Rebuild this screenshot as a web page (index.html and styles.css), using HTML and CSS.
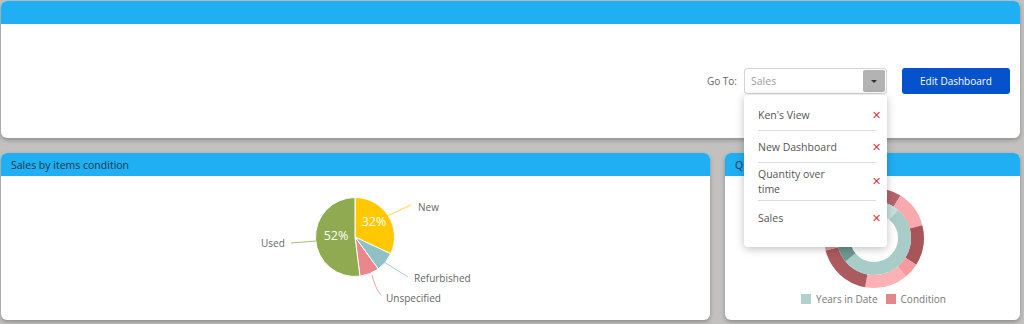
FILE: index.html
```html
<!DOCTYPE html>
<html lang="en">
<head>
<meta charset="utf-8">
<title>Dashboard</title>
<link rel="stylesheet" href="styles.css">
</head>
<body>
<div class="page">
  <section class="panel top-panel">
    <div class="panel-head"></div>
    <div class="top-body">
      <span class="goto-label">Go To:</span>
      <div class="select-wrap">
        <div class="select">
          <span class="select-value">Sales</span>
          <span class="select-btn"><span class="caret"></span></span>
        </div>
        <ul class="dropdown">
          <li class="dd-item"><span class="dd-label">Ken's View</span><span class="dd-x">&#x2715;</span></li>
          <li class="dd-item"><span class="dd-label">New Dashboard</span><span class="dd-x">&#x2715;</span></li>
          <li class="dd-item"><span class="dd-label">Quantity over time</span><span class="dd-x">&#x2715;</span></li>
          <li class="dd-item"><span class="dd-label">Sales</span><span class="dd-x">&#x2715;</span></li>
        </ul>
      </div>
      <button class="edit-btn">Edit Dashboard</button>
    </div>
  </section>

  <div class="bottom-row">
    <section class="panel">
      <div class="panel-head"><span class="panel-title">Sales by items condition</span></div>
      <div class="panel-body">
        <svg class="pie-chart" width="709" height="144" viewBox="0 0 709 144">
          <path d="M354 61 L354 21.5 A39.5 39.5 0 0 1 389.74 77.82 Z" fill="#ffc800" stroke="#fff" stroke-width="1"/>
          <path d="M354 61 L389.74 77.82 A39.5 39.5 0 0 1 377.22 92.96 Z" fill="#90bfc5" stroke="#fff" stroke-width="1"/>
          <path d="M354 61 L377.22 92.96 A39.5 39.5 0 0 1 358.95 100.19 Z" fill="#ea878c" stroke="#fff" stroke-width="1"/>
          <path d="M354 61 L358.95 100.19 A39.5 39.5 0 1 1 354 21.5 Z" fill="#8faa50" stroke="#fff" stroke-width="1"/>
          <text class="pct" x="335" y="64" text-anchor="middle">52%</text>
          <text class="pct" x="373" y="50" text-anchor="middle">32%</text>
          <path d="M386 40 L410 29" stroke="#ffd54a" fill="none"/>
          <path d="M315 65 L290 67" stroke="#a8bc78" fill="none"/>
          <path d="M383 86 L407 101" stroke="#a8cdd2" fill="none"/>
          <path d="M371 99 Q374 112 380 119" stroke="#ef9fa3" fill="none"/>
          <text class="lbl" x="417" y="35">New</text>
          <text class="lbl" x="260" y="71">Used</text>
          <text class="lbl" x="413" y="106">Refurbished</text>
          <text class="lbl" x="385" y="126">Unspecified</text>
        </svg>
      </div>
    </section>

    <section class="panel">
      <div class="panel-head"><span class="panel-title">Q</span></div>
      <div class="panel-body donut-body">
        <svg class="donut" width="295" height="116" viewBox="0 0 295 116">
          <g transform="rotate(-90 149 62)" fill="none" stroke-width="13">
            <circle cx="149" cy="62" r="43.5" stroke="#b5656a" stroke-dasharray="24.29 273.32" stroke-dashoffset="0"/>
            <circle cx="149" cy="62" r="43.5" stroke="#f8a9ad" stroke-dasharray="32.65 273.32" stroke-dashoffset="-24.29"/>
            <circle cx="149" cy="62" r="43.5" stroke="#a85559" stroke-dasharray="35.68 273.32" stroke-dashoffset="-56.94"/>
            <circle cx="149" cy="62" r="43.5" stroke="#f59a9e" stroke-dasharray="13.67 273.32" stroke-dashoffset="-92.62"/>
            <circle cx="149" cy="62" r="43.5" stroke="#fcb1b4" stroke-dasharray="37.96 273.32" stroke-dashoffset="-106.29"/>
            <circle cx="149" cy="62" r="43.5" stroke="#ab5a5e" stroke-dasharray="49.35 273.32" stroke-dashoffset="-144.25"/>
            <circle cx="149" cy="62" r="43.5" stroke="#f29a9d" stroke-dasharray="15.18 273.32" stroke-dashoffset="-193.6"/>
            <circle cx="149" cy="62" r="43.5" stroke="#b5656a" stroke-dasharray="64.53 273.32" stroke-dashoffset="-208.78"/>
            <circle cx="149" cy="62" r="30.5" stroke="#c5e0dd" stroke-dasharray="21.29 191.64" stroke-dashoffset="0"/>
            <circle cx="149" cy="62" r="30.5" stroke="#a8cdc9" stroke-dasharray="101.14 191.64" stroke-dashoffset="-21.29"/>
            <circle cx="149" cy="62" r="30.5" stroke="#6f9793" stroke-dasharray="17.03 191.64" stroke-dashoffset="-122.43"/>
            <circle cx="149" cy="62" r="30.5" stroke="#a8cdc9" stroke-dasharray="52.17 191.64" stroke-dashoffset="-139.46"/>
          </g>
        </svg>
        <div class="legend">
          <span class="legend-item"><span class="swatch swatch-teal"></span>Years in Date</span>
          <span class="legend-item"><span class="swatch swatch-red"></span>Condition</span>
        </div>
      </div>
    </section>
  </div>
</div>
</body>
</html>
```

FILE: styles.css
```css
* { box-sizing: border-box; }

html, body {
  margin: 0;
  padding: 0;
}

body {
  background: #c2c1c0;
  font-family: "Open Sans", "Noto Sans", sans-serif;
  color: #555;
  width: 1024px;
  height: 324px;
  overflow: hidden;
}

.page {
  padding: 1px 4px 0 1px;
  display: flex;
  flex-direction: column;
  gap: 15px;
}

.panel {
  background: #fff;
  border-radius: 6px;
  box-shadow: 0 2px 4px rgba(0, 0, 0, 0.28);
  position: relative;
}

.panel-head {
  height: 23px;
  background: #20aff3;
  border-radius: 6px 6px 0 0;
  display: flex;
  align-items: center;
  padding-left: 10px;
}

.panel-title {
  font-size: 10.5px;
  color: #1c3748;
}

.top-panel {
  height: 137px;
  z-index: 2;
}

.top-body {
  display: flex;
  justify-content: flex-end;
  align-items: center;
  padding: 44px 10px 0 0;
  height: 70px;
}

.goto-label {
  font-size: 10px;
  color: #666;
  margin-right: 7px;
  line-height: 26px;
}

.select-wrap {
  position: relative;
  width: 143px;
  height: 26px;
}

.select {
  width: 143px;
  height: 26px;
  border: 1px solid #d4d4d4;
  border-radius: 3px;
  display: flex;
  align-items: center;
  justify-content: space-between;
  padding: 0 1px 0 6px;
  background: #fff;
}

.select-value {
  font-size: 10.5px;
  color: #a0a0a0;
}

.select-btn {
  width: 22px;
  height: 22px;
  background: #b3b3b3;
  border-radius: 2px;
  display: flex;
  align-items: center;
  justify-content: center;
}

.caret {
  width: 0;
  height: 0;
  border-left: 3px solid transparent;
  border-right: 3px solid transparent;
  border-top: 3px solid #333;
}

.dropdown {
  position: absolute;
  top: 27px;
  left: 0;
  width: 143px;
  margin: 0;
  list-style: none;
  background: #fff;
  border-radius: 4px;
  box-shadow: 0 2px 8px rgba(0, 0, 0, 0.25);
  padding: 4px 11px 14px 14px;
  z-index: 10;
}

.dd-item {
  display: flex;
  align-items: center;
  justify-content: space-between;
  min-height: 32px;
  padding: 4px 0;
  border-bottom: 1px solid #dcdcdc;
  font-size: 10.5px;
  line-height: 14px;
  color: #555;
}

.dd-item:nth-child(3) {
  min-height: 38px;
  line-height: 14.5px;
}

.dd-item:last-child {
  border-bottom: none;
  padding-top: 6px;
}

.dd-label {
  max-width: 80px;
}

.dd-x {
  color: #e8343c;
  font-size: 10.5px;
  margin-right: -5px;
}

.edit-btn {
  margin-left: 15px;
  width: 108px;
  height: 26px;
  border: none;
  border-radius: 3px;
  background: #0552cc;
  color: #fff;
  font-family: inherit;
  font-size: 10px;
  padding: 0;
}

.bottom-row {
  display: grid;
  grid-template-columns: 709px 295px;
  column-gap: 15px;
  height: 167px;
}

.panel-body {
  height: 144px;
}

.pie-chart, .donut {
  display: block;
}

.pct {
  font-family: "Open Sans", sans-serif;
  font-size: 12.5px;
  fill: #fff;
}

.lbl {
  font-family: "Open Sans", sans-serif;
  font-size: 10px;
  fill: #666;
}

.donut-body {
  display: flex;
  flex-direction: column;
}

.legend {
  display: flex;
  justify-content: center;
  gap: 8px;
  font-size: 10px;
  color: #777;
  padding-left: 2px;
}

.legend-item {
  display: flex;
  align-items: center;
  gap: 5px;
}

.swatch {
  width: 10px;
  height: 10px;
  display: inline-block;
}

.swatch-teal { background: #b0d2cf; }
.swatch-red { background: #e5878a; }
```
